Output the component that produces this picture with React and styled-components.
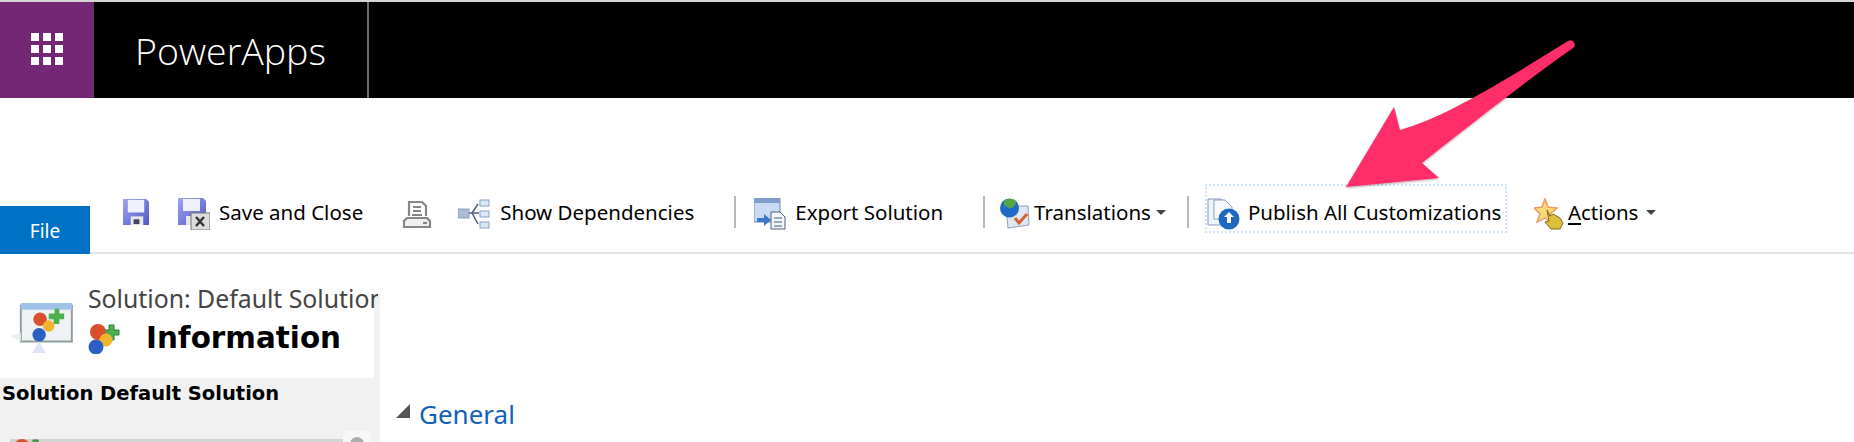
import React from "react";
import styled, { createGlobalStyle } from "styled-components";

const Global = createGlobalStyle`
  html, body {
    margin: 0;
    padding: 0;
    background: #fff;
    overflow: hidden;
  }
`;

const Page = styled.div`
  position: relative;
  width: 1854px;
  height: 442px;
  overflow: hidden;
  background: #fff;
  border-top: 2px solid #d6d6d6;
  box-sizing: border-box;
  font-family: "Noto Sans", "Open Sans", sans-serif;
  color: #000;
`;

const Header = styled.header`
  display: flex;
  height: 96px;
  background: #000;
`;

const WaffleBox = styled.div`
  width: 94px;
  display: flex;
  align-items: center;
  justify-content: center;
  background: #742774;
`;

const Waffle = styled.div`
  display: grid;
  grid-template-columns: repeat(3, 8px);
  grid-auto-rows: 8px;
  gap: 4px;
  margin-bottom: 2px;
  span {
    background: #fff;
  }
`;

const Brand = styled.div`
  width: 275px;
  box-sizing: border-box;
  padding-left: 41px;
  padding-top: 1px;
  display: flex;
  align-items: center;
  border-right: 2px solid #6e6e6e;
  color: #fff;
  font-family: "Open Sans", sans-serif;
  font-weight: 300;
  font-size: 37.5px;
`;

const Toolbar = styled.div`
  height: 156px;
  box-sizing: border-box;
  display: flex;
  align-items: flex-end;
  border-bottom: 2px solid #e4e4e4;
`;

const FileTab = styled.div`
  width: 90px;
  height: 48px;
  margin-bottom: -2px;
  display: flex;
  align-items: center;
  justify-content: center;
  padding-top: 2px;
  box-sizing: border-box;
  background: #0072c6;
  color: #fff;
  font-size: 19px;
`;

const Ribbon = styled.div`
  display: flex;
  align-items: center;
  height: 50px;
  margin-bottom: 15px;
`;

const Item = styled.div`
  display: flex;
  align-items: center;
  margin-left: ${(p) => p.$left || 0}px;
  gap: ${(p) => p.$gap ?? 9}px;
  font-size: 20.5px;
  white-space: nowrap;
  svg {
    flex: none;
    display: block;
    margin-top: ${(p) => p.$iconTop ?? 4}px;
  }
`;

const PublishItem = styled(Item)`
  height: 49px;
  width: 302px;
  margin-top: -7px;
  padding-top: 7px;
  box-sizing: border-box;
  border: 2px dotted #cfe3f6;
`;

const Sep = styled.div`
  width: 2px;
  height: 32px;
  margin-left: ${(p) => p.$left}px;
  background: #b4b9bf;
`;

const Caret = styled.span`
  width: 0;
  height: 0;
  margin-left: ${(p) => p.$left || 0}px;
  border-left: 5px solid transparent;
  border-right: 5px solid transparent;
  border-top: 5px solid #444;
`;

const Underlined = styled.span`
  text-decoration: underline;
  text-underline-offset: 3px;
`;

const Body = styled.div`
  display: flex;
  height: 188px;
`;

const Sidebar = styled.aside`
  width: 380px;
  flex: none;
  overflow: hidden;
  background: linear-gradient(#fff 39px, #f1f1f1 39px);
`;

const SideHead = styled.div`
  width: 374px;
  height: 124px;
  box-sizing: border-box;
  padding-top: 29px;
  display: flex;
  background: #fff;
`;

const BigIcon = styled.div`
  width: 88px;
  margin-left: 10px;
  padding-top: 18px;
  flex: none;
`;

const HeadText = styled.div`
  margin-left: -10px;
`;

const Crumb = styled.div`
  width: 290px;
  font-size: 24.8px;
  line-height: 30px;
  color: #444;
  white-space: nowrap;
  overflow: hidden;
`;

const EntityRow = styled.div`
  display: flex;
  align-items: center;
  gap: 26px;
  margin-top: 7px;
`;

const EntityName = styled.div`
  font-family: "DejaVu Sans", sans-serif;
  font-weight: 700;
  font-size: 29.4px;
  line-height: 36px;
`;

const SolutionName = styled.div`
  margin: 4px 0 0 2px;
  font-family: "DejaVu Sans", sans-serif;
  font-weight: 700;
  font-size: 19.5px;
  line-height: 24px;
  white-space: nowrap;
`;

const Slider = styled.div`
  display: flex;
  align-items: flex-start;
  margin: 25px 0 0 10px;
  width: 360px;
`;

const Track = styled.div`
  position: relative;
  width: 333px;
  height: 12px;
  margin-top: 8px;
  background: #d2d2d2;
  svg {
    position: absolute;
    left: 2px;
    top: -2px;
  }
`;

const Thumb = styled.div`
  width: 27px;
  height: 14px;
  background: #f7f7f7;
  &::after {
    content: "";
    display: block;
    width: 14px;
    height: 14px;
    margin: 6px auto 0;
    border-radius: 50%;
    background: #adadad;
  }
`;

const Main = styled.main`
  flex: 1;
  padding: 143px 0 0 16px;
`;

const SectionHead = styled.div`
  display: flex;
  align-items: center;
  gap: 9px;
  color: #1160b7;
  font-size: 26px;
  line-height: 34px;
`;

const Triangle = styled.span`
  width: 0;
  height: 0;
  margin-top: -6px;
  border-left: 14px solid transparent;
  border-bottom: 14px solid #555;
`;

const ArrowLayer = styled.svg`
  position: absolute;
  left: 0;
  top: -2px;
  pointer-events: none;
`;

const SaveIcon = () => (
  <svg width="28" height="28" viewBox="0 0 29 29">
    <defs>
      <linearGradient id="fl1" x1="0" y1="0" x2="1" y2="1">
        <stop offset="0" stopColor="#a0a4f0" />
        <stop offset="1" stopColor="#5157c4" />
      </linearGradient>
    </defs>
    <path d="M1 1h24l3 3v24H1z" fill="url(#fl1)" />
    <rect x="6" y="2" width="17" height="13" fill="#eef0fb" />
    <rect x="9" y="19" width="13" height="9" fill="#e6e6ec" />
    <rect x="12" y="22" width="6" height="5" fill="#44445c" />
  </svg>
);

const SaveCloseIcon = () => (
  <svg width="32" height="32" viewBox="0 0 32 32">
    <defs>
      <linearGradient id="fl3" x1="0" y1="0" x2="1" y2="1">
        <stop offset="0" stopColor="#a0a4f0" />
        <stop offset="1" stopColor="#5157c4" />
      </linearGradient>
    </defs>
    <path d="M0 0h25l3 3v24H0z" fill="url(#fl3)" />
    <rect x="5" y="1" width="17" height="12" fill="#eef0fb" />
    <rect x="8" y="18" width="12" height="9" fill="#e6e6ec" />
    <rect x="13" y="15" width="19" height="17" fill="#dcdcdc" stroke="#777" />
    <path d="M18 19l8 9M26 19l-8 9" stroke="#333" strokeWidth="2.4" />
  </svg>
);

const PrintIcon = () => (
  <svg width="30" height="28" viewBox="0 0 30 28" fill="none" stroke="#868686" strokeWidth="2.2">
    <path d="M7 16V2h13l4 4v10" />
    <path d="M11 7h8M11 11h8M10 15h10" strokeWidth="1.8" />
    <path d="M5 18h20l3 3v6H2v-6z" fill="#f1f1f1" />
    <path d="M21 23h4" />
  </svg>
);

const DepsIcon = () => (
  <svg width="32" height="30" viewBox="0 0 32 30">
    <rect x="0" y="10" width="11" height="9" fill="#a8bcd6" stroke="#8ba0bd" />
    <rect x="22" y="1" width="9" height="6" fill="#dce7f5" stroke="#88a2c4" />
    <rect x="22" y="12" width="9" height="6" fill="#dce7f5" stroke="#88a2c4" />
    <rect x="22" y="23" width="9" height="6" fill="#dce7f5" stroke="#88a2c4" />
    <path d="M11 14h10M14 14l6-9M14 14l6 11" stroke="#4e5f78" strokeWidth="1.5" fill="none" />
  </svg>
);

const ExportIcon = () => (
  <svg width="32" height="32" viewBox="0 0 32 32">
    <rect x="0" y="0" width="26" height="24" fill="#c9daf2" stroke="#6f8db5" />
    <rect x="0" y="0" width="26" height="5" fill="#7f9fca" />
    <path d="M3 20h7v-4l7 6-7 6v-4H3z" fill="#3a78c8" />
    <path d="M17 14h9l5 5v12H17z" fill="#f1f4f8" stroke="#4a5f7a" />
    <path d="M20 20h8M20 24h8M20 28h8" stroke="#7d8ea3" strokeWidth="1.4" />
  </svg>
);

const TranslateIcon = () => (
  <svg width="30" height="32" viewBox="0 0 30 32">
    <path d="M6 8h22l1 19-21 3z" fill="#dfe7f2" stroke="#8fa0b8" />
    <circle cx="9.5" cy="10" r="9.5" fill="#1f6ac4" />
    <path d="M4 3c4-3 9-3 12 0 1 3-2 5-4 7-2 1-5-1-8-3z" fill="#53a548" />
    <path d="M15 20l4 5 8-9" fill="none" stroke="#d9603a" strokeWidth="3" />
  </svg>
);

const PublishIcon = () => (
  <svg width="33" height="32" viewBox="0 0 33 32">
    <path d="M1 1h13l6 6v20H1z" fill="#eef2f9" stroke="#8a9cba" />
    <path d="M7 2h11l7 7v12H7z" fill="#f8fafd" stroke="#8a9cba" />
    <circle cx="22" cy="21" r="10.5" fill="#1c68c0" />
    <path d="M22 14l5 5h-3v6h-4v-6h-3z" fill="#fff" />
  </svg>
);

const ActionsIcon = () => (
  <svg width="30" height="32" viewBox="0 0 30 32">
    <path d="M11 1l3 8 9 1-7 6 2 9-7-5-8 4 3-8-6-6 8-1z" fill="#f8d978" stroke="#ec9a66" strokeWidth="1.5" />
    <path d="M13 12l3 6 3-2 7 4 3 5-3 6H17l-6-7 4-1z" fill="#dcbf3a" stroke="#7c6a1e" />
  </svg>
);

const EntityIcon = () => (
  <svg width="32" height="32" viewBox="0 0 32 32">
    <path d="M21 3h5v5h5v5h-5v5h-5v-5h-5V8h5z" fill="#4caf50" stroke="#2d7d32" />
    <circle cx="10" cy="10" r="8" fill="#d9502c" />
    <circle cx="18" cy="18" r="6.5" fill="#f0b52f" />
    <circle cx="8" cy="25" r="7.5" fill="#2c5fc4" />
  </svg>
);

const BigEntityIcon = () => (
  <svg width="64" height="52" viewBox="0 0 66 54">
    <path d="M11 5h53v37H11z" fill="#eef2f4" stroke="#8a9f9a" strokeWidth="2" />
    <rect x="11" y="2" width="53" height="7" fill="#9ec2e8" />
    <path d="M0 36l11-3v9z" fill="#ededed" />
    <path d="M46 8h5v5h5v6h-5v5h-6v-5h-5v-6h6z" fill="#4caf50" />
    <circle cx="31" cy="19" r="7" fill="#d9502c" />
    <circle cx="40" cy="26" r="6" fill="#f0b52f" />
    <circle cx="30" cy="35" r="7" fill="#2c5fc4" />
    <path d="M30 42l7 12H23z" fill="#dbe3f4" />
  </svg>
);

export default function App() {
  return (
    <Page>
      <Global />
      <Header>
        <WaffleBox>
          <Waffle>
            {Array.from({ length: 9 }).map((_, i) => (
              <span key={i} />
            ))}
          </Waffle>
        </WaffleBox>
        <Brand>PowerApps</Brand>
      </Header>

      <Toolbar>
        <FileTab>File</FileTab>
        <Ribbon>
          <Item $left={32} $iconTop={0}>
            <SaveIcon />
          </Item>
          <Item $left={28}>
            <SaveCloseIcon />
            Save and Close
          </Item>
          <Item $left={39}>
            <PrintIcon />
          </Item>
          <Item $left={26} $gap={10}>
            <DepsIcon />
            Show Dependencies
          </Item>
          <Sep $left={40} />
          <Item $left={18} $gap={9}>
            <ExportIcon />
            Export Solution
          </Item>
          <Sep $left={40} />
          <Item $left={15} $gap={4}>
            <TranslateIcon />
            Translations
            <Caret $left={1} />
          </Item>
          <Sep $left={21} />
          <PublishItem $left={16} $gap={8}>
            <PublishIcon />
            Publish All Customizations
          </PublishItem>
          <Item $left={27} $gap={4}>
            <ActionsIcon />
            <span>
              <Underlined>A</Underlined>ctions
            </span>
            <Caret $left={4} />
          </Item>
        </Ribbon>
      </Toolbar>

      <Body>
        <Sidebar>
          <SideHead>
            <BigIcon>
              <BigEntityIcon />
            </BigIcon>
            <HeadText>
              <Crumb>Solution: Default Solution</Crumb>
              <EntityRow>
                <EntityIcon />
                <EntityName>Information</EntityName>
              </EntityRow>
            </HeadText>
          </SideHead>
          <SolutionName>Solution Default Solution</SolutionName>
          <Slider>
            <Track>
              <EntityIcon />
            </Track>
            <Thumb />
          </Slider>
        </Sidebar>
        <Main>
          <SectionHead>
            <Triangle />
            General
          </SectionHead>
        </Main>
      </Body>

      <ArrowLayer width="1854" height="442" viewBox="0 0 1854 442">
        <defs>
          <filter id="arrowShadow" x="-10%" y="-10%" width="120%" height="120%">
            <feDropShadow dx="0" dy="1" stdDeviation="1.2" floodColor="#000" floodOpacity="0.35" />
          </filter>
        </defs>
        <path
          d="M1346 187 L1394 107 L1400 130 C1440 118 1480 96 1568 41 C1573 39 1577 45 1573 48 C1530 78 1470 125 1422 163 L1439 178 Z"
          fill="#ff2d6b"
          filter="url(#arrowShadow)"
        />
      </ArrowLayer>
    </Page>
  );
}
